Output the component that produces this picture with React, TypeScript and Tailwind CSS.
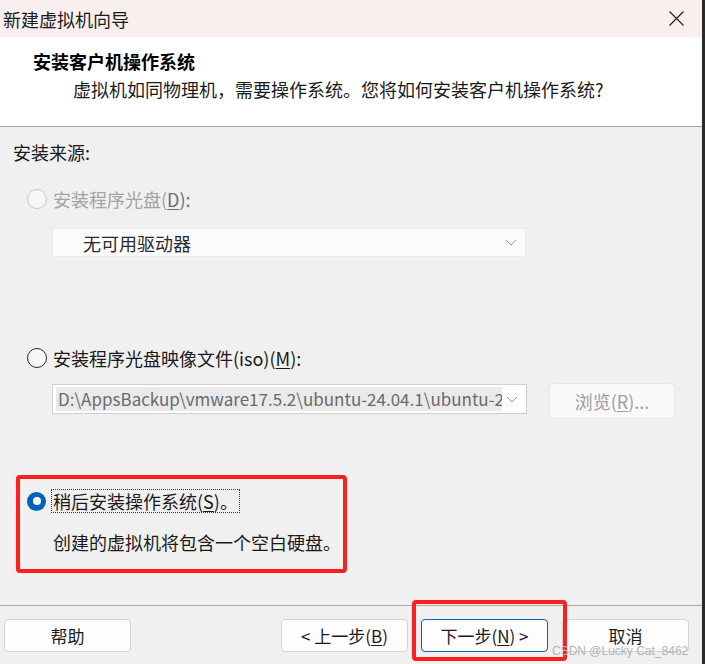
import React from "react";

const FONT = { fontFamily: '"Noto Sans CJK SC", "Microsoft YaHei", sans-serif' };

function Radio({ state }: { state: "disabled" | "off" | "on" }) {
  if (state === "on") {
    return (
      <span className="flex h-[19px] w-[19px] shrink-0 items-center justify-center rounded-full bg-[#0063b8]">
        <span className="h-[8px] w-[8px] rounded-full bg-white" />
      </span>
    );
  }
  return (
    <span
      className={`h-[20px] w-[20px] shrink-0 rounded-full border ${
        state === "disabled" ? "border-[#c6c6c6] bg-[#f6f6f6]" : "border-[#2a2a2a] bg-[#f7f7f7]"
      }`}
    />
  );
}

function Chevron() {
  return (
    <svg width="12" height="7" viewBox="0 0 12 7" className="shrink-0">
      <path d="M1 1 L6 6 L11 1" fill="none" stroke="#9a9a9a" strokeWidth="1" />
    </svg>
  );
}

function Btn({ children, primary }: { children: React.ReactNode; primary?: boolean }) {
  return (
    <button
      className={`flex h-[33px] w-[127px] items-center justify-center rounded-[4px] border bg-[#fdfdfd] text-[17px] text-[#1b1b1b] ${
        primary ? "border-[#0063b8]" : "border-[#d3d3d3]"
      }`}
    >
      {children}
    </button>
  );
}

export default function App() {
  return (
    <div className="flex h-[664px] w-[705px] overflow-hidden bg-[#f0f0f0]" style={FONT}>
      <div className="relative flex w-[702px] flex-col">
        {/* title bar */}
        <div className="flex h-[37px] items-center justify-between bg-[#f9efef] pl-[3px] pr-[18px]">
          <span className="text-[18px] leading-[24px] text-[#1a1a1a]">新建虚拟机向导</span>
          <svg width="15" height="15" viewBox="0 0 15 15">
            <path d="M0.5 0.5 L14.5 14.5 M14.5 0.5 L0.5 14.5" stroke="#222" strokeWidth="1.2" />
          </svg>
        </div>

        {/* header */}
        <div className="h-[90px] border-b border-[#a8a8a8] bg-white pt-[12px]">
          <div className="pl-[33px] text-[18px] font-bold leading-[24px] text-black">安装客户机操作系统</div>
          <div className="mt-[4px] pl-[73px] text-[18px] leading-[24px] text-[#1a1a1a]">
            虚拟机如同物理机，需要操作系统。您将如何安装客户机操作系统?
          </div>
        </div>

        {/* body */}
        <div className="flex-1 text-[18px] leading-[24px]">
          <div className="mt-[13px] pl-[13px] text-[#1a1a1a]">安装来源:</div>

          <div className="mt-[23px] flex items-center gap-[6px] pl-[27px]">
            <Radio state="disabled" />
            <span className="text-[#a3a3a3]">
              安装程序光盘(<span className="text-[#6d6d6d] underline underline-offset-2">D</span>
              <span className="text-[#6d6d6d]">):</span>
            </span>
          </div>

          <div className="ml-[52px] mt-[17px] flex h-[29px] w-[474px] items-center justify-between border border-[#ebebeb] bg-[#fbfbfb] pl-[30px] pr-[8px]">
            <span className="text-[#2a2a2a]">无可用驱动器</span>
            <Chevron />
          </div>

          <div className="mt-[89px] flex items-center gap-[6px] pl-[27px] text-[#1a1a1a]">
            <Radio state="off" />
            <span>
              安装程序光盘映像文件(iso)(<span className="underline underline-offset-2">M</span>):
            </span>
          </div>

          <div className="ml-[52px] mt-[13px] flex items-start">
            <div className="mt-[1px] flex h-[30px] w-[475px] items-center justify-between border border-[#cfcfcf] bg-white pl-[3px] pr-[8px]">
              <span className="w-[446px] overflow-hidden whitespace-nowrap bg-[#eaeaea] pl-[2px] text-[17px] text-[#6a6a6a]">
                D:\AppsBackup\vmware17.5.2\ubuntu-24.04.1\ubuntu-2
              </span>
              <Chevron />
            </div>
            <div className="ml-[22px] flex h-[36px] w-[126px] items-center justify-center rounded-[4px] border border-[#e6e6e6] bg-[#f9f9f9] text-[#a0a0a0]">
              浏览(<span className="underline underline-offset-2">R</span>)...
            </div>
          </div>

          {/* highlighted option */}
          <div className="ml-[16px] mt-[56px] h-[98px] w-[331px] rounded-[4px] border-[4px] border-[#fb1f1f] pt-[10px] text-[#1a1a1a]">
            <div className="flex items-center gap-[5px] pl-[7px]">
              <Radio state="on" />
              <span className="border border-dotted border-[#333] px-[1px] leading-[22px]">
                稍后安装操作系统(<span className="underline underline-offset-2">S</span>)。
              </span>
            </div>
            <div className="mt-[17px] pl-[33px]">创建的虚拟机将包含一个空白硬盘。</div>
          </div>
        </div>

        {/* footer */}
        <div className="flex h-[59px] items-start border-t border-[#a8a8a8] pt-[13px] pl-[4px]">
          <Btn>帮助</Btn>
          <div className="ml-[150px]">
            <Btn>
              &lt; 上一步(<span className="underline underline-offset-2">B</span>)
            </Btn>
          </div>
          <div className="ml-[13px]">
            <Btn primary>
              下一步(<span className="underline underline-offset-2">N</span>) &gt;
            </Btn>
          </div>
          <div className="ml-[14px]">
            <Btn>取消</Btn>
          </div>
        </div>

        {/* annotation + watermark */}
        <div className="pointer-events-none absolute left-[412px] top-[600px] h-[61px] w-[155px] rounded-[4px] border-[4px] border-[#fb1f1f]" />
        <div
          className="pointer-events-none absolute left-[552px] top-[643px] text-[12px] leading-[16px] text-[#b4b4b4]"
          style={{ fontFamily: '"Liberation Sans", Arial, sans-serif' }}
        >
          CSDN @Lucky Cat_8462
        </div>
      </div>
      <div className="w-[3px] bg-[#2b2b2b]" />
    </div>
  );
}
